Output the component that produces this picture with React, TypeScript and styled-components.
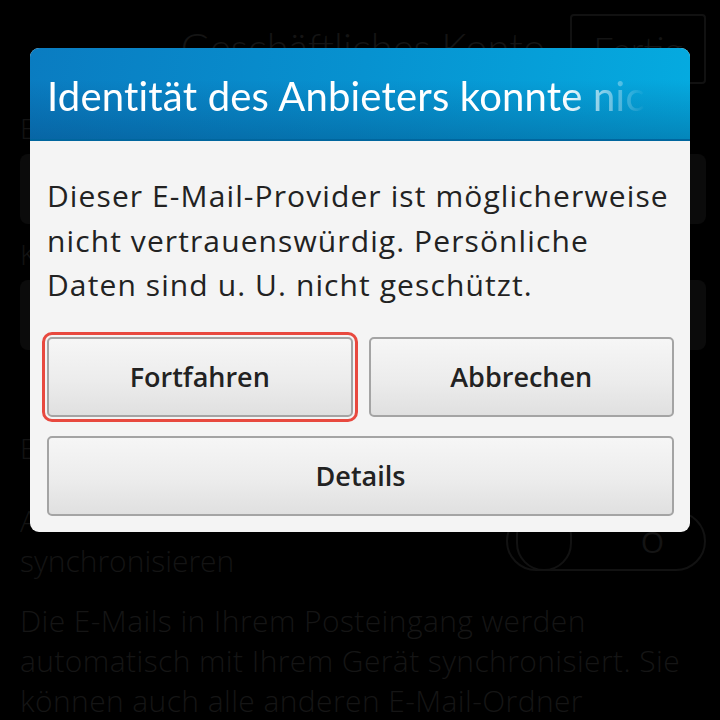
import React from "react";
import styled, { createGlobalStyle } from "styled-components";

const GlobalStyle = createGlobalStyle`
  html, body {
    margin: 0;
    padding: 0;
    background: #000;
  }
  body {
    width: 720px;
    height: 720px;
    overflow: hidden;
    font-family: "Open Sans", "Noto Sans", sans-serif;
  }
`;

export default function App() {
  return (
    <>
      <GlobalStyle />
      <Screen>
        <Page>
          <TitleBar>
            <span />
            <PageTitle>Geschäftliches Konto</PageTitle>
            <DoneButton>Fertig</DoneButton>
          </TitleBar>
          <Label>E-Mail-Adresse</Label>
          <Field />
          <Label>Kennwort</Label>
          <Field />
          <Label $top={80}>Erweiterte Einstellungen</Label>
          <ToggleRow>
            <ToggleLabel>Alle E-Mail-Ordner synchronisieren</ToggleLabel>
            <Toggle>
              <Knob />
              <ToggleMark>O</ToggleMark>
            </Toggle>
          </ToggleRow>
          <Paragraph>
            Die E-Mails in Ihrem Posteingang werden automatisch mit Ihrem Gerät
            synchronisiert. Sie können auch alle anderen E-Mail-Ordner
            synchronisieren.
          </Paragraph>
        </Page>

        <Dialog>
          <Header>
            <Title>Identität des Anbieters konnte nicht überprüft werden</Title>
          </Header>
          <Body>
            <Message>
              Dieser E-Mail-Provider ist möglicherweise nicht
              vertrauenswürdig. Persönliche Daten sind u. U. nicht geschützt.
            </Message>
            <Buttons>
              <Button $focused>Fortfahren</Button>
              <Button>Abbrechen</Button>
              <Button $wide>Details</Button>
            </Buttons>
          </Body>
        </Dialog>
      </Screen>
    </>
  );
}

const Screen = styled.div`
  position: relative;
  width: 720px;
  height: 720px;
  overflow: hidden;
  background: #000;
`;

const Page = styled.div`
  display: flex;
  flex-direction: column;
  padding: 0 14px 0 20px;
  color: #151515;
`;

const TitleBar = styled.div`
  display: grid;
  grid-template-columns: 1fr auto 1fr;
  align-items: start;
  height: 98px;
  padding-top: 14px;
  box-sizing: border-box;
`;

const PageTitle = styled.div`
  font-family: Lato, sans-serif;
  font-size: 40px;
  font-weight: 300;
  line-height: 64px;
  margin-top: 1px;
  color: #141414;
`;

const DoneButton = styled.div`
  justify-self: end;
  width: 136px;
  height: 70px;
  border: 2px solid #111;
  border-radius: 4px;
  box-sizing: border-box;
  font-family: Lato, sans-serif;
  font-size: 36px;
  font-weight: 300;
  line-height: 66px;
  text-align: center;
  color: #141414;
`;

const Label = styled.div<{ $top?: number }>`
  margin-top: ${(p) => p.$top ?? 12}px;
  font-size: 28px;
  font-weight: 300;
  line-height: 36px;
  color: #141414;
`;

const Field = styled.div`
  margin-top: 8px;
  height: 70px;
  border-radius: 8px;
  background: #0b0b0b;
`;

const ToggleRow = styled.div`
  display: grid;
  grid-template-columns: 1fr 200px;
  align-items: center;
  gap: 20px;
  margin-top: 35px;
`;

const ToggleLabel = styled.div`
  font-size: 30px;
  font-weight: 300;
  line-height: 40px;
  color: #141414;
`;

const Toggle = styled.div`
  position: relative;
  height: 56px;
  border: 2px solid #121212;
  border-radius: 30px;
  display: flex;
  align-items: center;
  justify-content: flex-end;
  padding-right: 40px;
`;

const Knob = styled.div`
  position: absolute;
  left: 8px;
  top: -6px;
  width: 52px;
  height: 60px;
  border: 2px solid #121212;
  border-radius: 30px;
`;

const ToggleMark = styled.span`
  font-size: 30px;
  color: #141414;
`;

const Paragraph = styled.p`
  margin: 20px 0 0;
  font-size: 30px;
  font-weight: 300;
  letter-spacing: 0.4px;
  line-height: 40px;
  color: #151515;
`;

const Dialog = styled.div`
  position: absolute;
  left: 30px;
  top: 48px;
  width: 660px;
  border-radius: 9px;
  overflow: hidden;
  background: #f4f4f4;
  display: flex;
  flex-direction: column;
`;

const Header = styled.div`
  height: 93px;
  box-sizing: border-box;
  border-bottom: 2px solid #00669e;
  padding: 0 44px 0 17px;
  display: flex;
  align-items: center;
  background:
    linear-gradient(to bottom, rgba(0, 40, 90, 0) 35%, rgba(0, 40, 90, 0.28) 100%),
    linear-gradient(100deg, #0a7cc1 0%, #0792d0 50%, #05abe0 100%);
`;

const Title = styled.div`
  flex: 1;
  min-width: 0;
  white-space: nowrap;
  overflow: hidden;
  color: #fff;
  font-family: Lato, sans-serif;
  font-size: 40px;
  font-weight: 400;
  letter-spacing: 0.2px;
  line-height: 50px;
  padding-top: 4px;
  -webkit-mask-image: linear-gradient(to right, #000 86%, transparent 100%);
  mask-image: linear-gradient(to right, #000 86%, transparent 100%);
`;

const Body = styled.div`
  padding: 33px 16px 16px 17px;
`;

const Message = styled.p`
  margin: 0;
  font-size: 30px;
  letter-spacing: 1.1px;
  line-height: 44.5px;
  color: #222;
`;

const Buttons = styled.div`
  margin-top: 29px;
  display: grid;
  grid-template-columns: 1fr 1fr;
  column-gap: 16px;
  row-gap: 19px;
`;

const Button = styled.button<{ $focused?: boolean; $wide?: boolean }>`
  grid-column: ${(p) => (p.$wide ? "1 / -1" : "auto")};
  height: 80px;
  border: 2px solid #a4a4a4;
  border-radius: 5px;
  background: linear-gradient(to bottom, #f6f6f6 0%, #ececec 55%, #e0e0e0 100%);
  font-family: "Open Sans", "Noto Sans", sans-serif;
  font-size: 27px;
  font-weight: 600;
  color: #222;
  padding: 0;
  outline: ${(p) => (p.$focused ? "3px solid #e8493f" : "none")};
  outline-offset: 2px;
`;
